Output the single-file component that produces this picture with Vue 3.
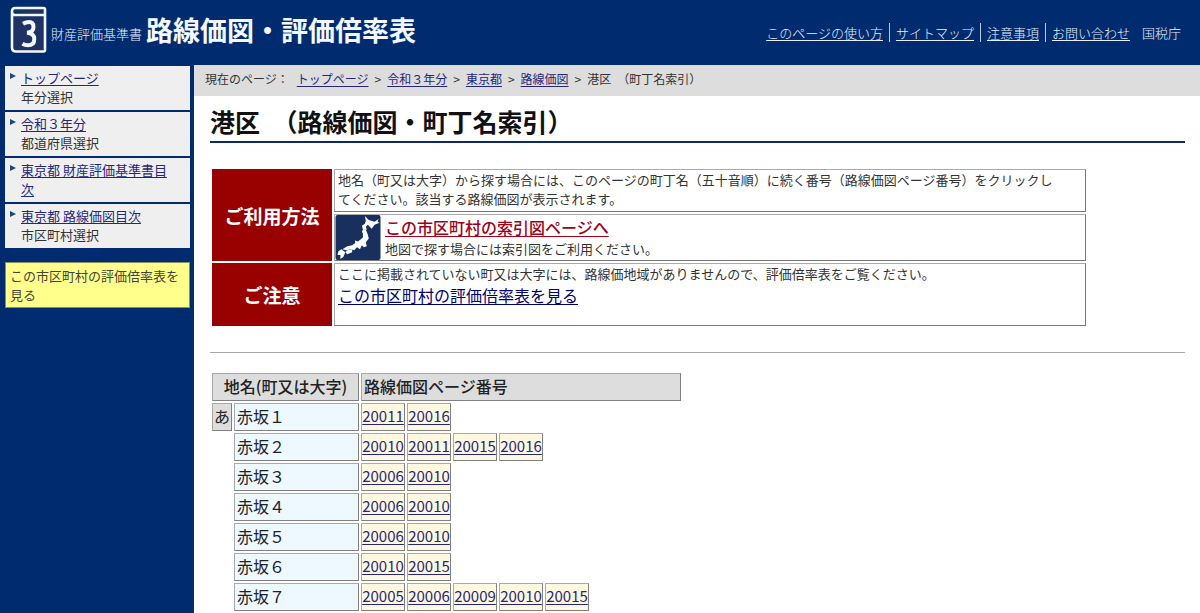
<script setup>
const headerLinks = ['このページの使い方', 'サイトマップ', '注意事項', 'お問い合わせ']

const menu = [
  { link: 'トップページ', note: '年分選択' },
  { link: '令和３年分', note: '都道府県選択' },
  { link: '東京都 財産評価基準書目次', note: '' },
  { link: '東京都 路線価図目次', note: '市区町村選択' },
]

const crumbs = ['トップページ', '令和３年分', '東京都', '路線価図']

const towns = [
  { index: 'あ', name: '赤坂１', pages: ['20011', '20016'] },
  { index: '', name: '赤坂２', pages: ['20010', '20011', '20015', '20016'] },
  { index: '', name: '赤坂３', pages: ['20006', '20010'] },
  { index: '', name: '赤坂４', pages: ['20006', '20010'] },
  { index: '', name: '赤坂５', pages: ['20006', '20010'] },
  { index: '', name: '赤坂６', pages: ['20010', '20015'] },
  { index: '', name: '赤坂７', pages: ['20005', '20006', '20009', '20010', '20015'] },
]
</script>

<template>
  <div class="page">
    <header class="header">
      <div class="brand">
        <svg class="book" viewBox="0 0 38 48" aria-hidden="true">
          <path d="M35 9V3.500Q35 2 33.500 2H5Q2 2 2 5.500Q2 9 5 9H35V44Q35 45.500 33.500 45.500H6Q2 45.500 2 41.500V5.500" fill="#1f3263" stroke="#f2f8ff" stroke-width="2.600" stroke-linejoin="round" />
          <path d="M13 17.800Q16 16 19 16Q23.500 16 23.500 21Q23.500 26.300 17 26.700Q24.300 27.200 24.300 33Q24.300 39.300 18 39.300Q14.800 39.300 12.500 37.800" fill="none" stroke="#f2f8ff" stroke-width="4" />
        </svg>
        <span class="brand-sub">財産評価基準書</span>
        <span class="brand-title">路線価図・評価倍率表</span>
      </div>
      <nav class="header-nav">
        <a v-for="item in headerLinks" :key="item" href="#">{{ item }}</a>
        <span class="agency">国税庁</span>
      </nav>
    </header>

    <div class="body">
      <aside class="sidebar">
        <ul class="menu">
          <li v-for="item in menu" :key="item.link">
            <a href="#">{{ item.link }}</a>
            <span v-if="item.note" class="note">{{ item.note }}</span>
          </li>
        </ul>
        <a class="rate-link" href="#">この市区町村の評価倍率表を見る</a>
      </aside>

      <main class="main">
        <nav class="crumbs">
          <span class="here">現在のページ：</span>
          <template v-for="item in crumbs" :key="item">
            <a href="#">{{ item }}</a><span class="sep">&gt;</span>
          </template>
          <span>港区　（町丁名索引）</span>
        </nav>

        <div class="content">
          <h1>港区　（路線価図・町丁名索引）</h1>

          <table class="guide">
            <tbody>
              <tr class="usage">
                <th rowspan="2" scope="rowgroup">ご利用方法</th>
                <td>地名（町又は大字）から探す場合には、このページの町丁名（五十音順）に続く番号（路線価図ページ番号）をクリックし<br>てください。該当する路線価図が表示されます。</td>
              </tr>
              <tr class="map-row">
                <td>
                  <div class="map-box">
                    <svg class="map" viewBox="0 0 46 46" aria-hidden="true">
                      <rect width="46" height="46" rx="2" fill="#19305f" />
                      <g fill="#fafdff">
                        <path d="M30 1L34 5L40 7L44 4L43 7L45 8L40 10L37 14L33 10L31 12L32 15L28 15L27 11L30 9L31 6Z" />
                        <path d="M28 15L31 15L33 20L34 24L31 28L32 32L29 33L27 31L25 35L22 33L19 36L16 35L11 36L7 35L12 32L17 31L20 29L20 26L23 27L28 23L28 19L27 17Z" />
                        <path d="M12 36L17 35L17 38L12 40L10 38Z" />
                        <path d="M3 37L6 35L10 38L8 43L5 45L5 41L2 41Z" />
                      </g>
                    </svg>
                    <div>
                      <a class="big-link red" href="#">この市区町村の索引図ページへ</a>
                      <p>地図で探す場合には索引図をご利用ください。</p>
                    </div>
                  </div>
                </td>
              </tr>
              <tr class="notice">
                <th scope="row">ご注意</th>
                <td>
                  <p>ここに掲載されていない町又は大字には、路線価地域がありませんので、評価倍率表をご覧ください。</p>
                  <a class="big-link" href="#">この市区町村の評価倍率表を見る</a>
                </td>
              </tr>
            </tbody>
          </table>

          <hr>

          <table class="towns">
            <thead>
              <tr>
                <th colspan="2" scope="col" class="place">地名(町又は大字)</th>
                <th colspan="7" scope="col">路線価図ページ番号</th>
              </tr>
            </thead>
            <tbody>
              <tr v-for="town in towns" :key="town.name">
                <td :class="{ index: town.index }">{{ town.index }}</td>
                <td class="name">{{ town.name }}</td>
                <td v-for="page in town.pages" :key="page" class="number"><a href="#">{{ page }}</a></td>
                <td v-for="n in 7 - town.pages.length" :key="n" class="blank"></td>
              </tr>
            </tbody>
          </table>
        </div>
      </main>
    </div>
  </div>
</template>

<style>
body {
  background: #002b6e;
}
html {
  overflow: hidden;
}
</style>

<style scoped>
.page {
  font-family: "Noto Sans CJK JP", sans-serif;
  font-size: 13px;
  line-height: 19px;
  color: #333;
  height: 100vh;
  overflow: hidden;
  display: flex;
  flex-direction: column;
}
p {
  margin: 0;
}
.header {
  display: flex;
  justify-content: space-between;
  align-items: center;
  height: 65px;
  flex: none;
  padding: 0 19px 0 10px;
  background: #002b6e;
  color: #e6f0ff;
}
.brand {
  display: flex;
  align-items: center;
  padding-bottom: 6px;
}
.book {
  width: 38px;
  height: 48px;
  margin-right: 3px;
}
.brand-sub {
  font-weight: 300;
  margin-top: 8px;
}
.brand-title {
  font-size: 27px;
  line-height: 40px;
  font-weight: 700;
  color: #f4f9ff;
  margin-left: 4px;
}
.header-nav {
  display: flex;
  align-items: center;
  font-weight: 300;
}
.header-nav a {
  color: inherit;
  padding: 0 6px;
  border-right: 1px solid #b9cbe6;
}
.header-nav a:last-of-type {
  border-right: 0;
}
.agency {
  margin-left: 6px;
}
a {
  color: #26267c;
  text-underline-offset: 2px;
}
.body {
  display: flex;
  flex: 1;
  min-height: 0;
}
.sidebar {
  width: 194px;
  flex: none;
  box-sizing: border-box;
  padding: 1px 4px 0 5px;
}
.menu {
  list-style: none;
  margin: 0 0 14px;
  padding: 0;
  display: flex;
  flex-direction: column;
  gap: 2px;
}
.menu li {
  position: relative;
  background: #efefef;
  min-height: 38px;
  padding: 2px 14px 4px 16px;
}
.menu li::before {
  content: "";
  position: absolute;
  left: 5px;
  top: 7px;
  border-left: 6px solid #1c4a7c;
  border-top: 3px solid transparent;
  border-bottom: 3px solid transparent;
}
.note {
  display: block;
}
.rate-link {
  display: block;
  background: #ffff8c;
  border: 1px solid #8d8d62;
  padding: 3px 4px;
  color: #444433;
  text-decoration: none;
}
.main {
  flex: 1;
  min-width: 0;
  background: #fff;
}
.crumbs {
  display: flex;
  background: #ddd;
  font-size: 12px;
  padding: 4px 11px 8px;
}
.here {
  margin-right: 8px;
}
.sep {
  margin: 0 6px;
}
.content {
  padding: 7px 15px 0 16px;
}
h1 {
  margin: 0 0 24px;
  padding-bottom: 2px;
  font-size: 25px;
  line-height: 36px;
  font-weight: 700;
  color: #111;
  border-bottom: 2px solid #0c2c5c;
}
table {
  border-collapse: separate;
  border-spacing: 2px;
}
td,
th {
  box-sizing: border-box;
}
.guide {
  width: 90%;
}
.guide th {
  width: 120px;
  background: #900;
  color: #fff;
  font-size: 19px;
  padding: 0;
}
.guide td {
  border: 1px solid;
  border-color: #aaa #777 #777 #aaa;
  padding: 0 3px 2px;
  vertical-align: top;
}
.guide .usage td {
  height: 43px;
}
.guide .map-row td {
  padding: 0;
}
.map-box {
  display: flex;
  gap: 4px;
}
.map {
  width: 46px;
  height: 45px;
  flex: none;
}
.big-link {
  display: inline-block;
  font-size: 16px;
  line-height: 24px;
  font-weight: 400;
  color: #00006c;
}
.big-link.red {
  color: #a00018;
  font-weight: 500;
}
.guide .notice td {
  height: 63px;
}
hr {
  margin: 24px 0 18px;
  border: 0;
  border-top: 1px solid #aaa;
}
.towns {
  table-layout: fixed;
  font-size: 16px;
  line-height: 24px;
  color: #222;
}
.towns th,
.towns td {
  height: 28px;
  padding: 0 2px 2px;
  text-align: left;
  white-space: nowrap;
}
.towns th,
.index,
.name,
.number {
  border: 1px solid;
  border-color: #aaa #808080 #808080 #aaa;
}
.towns th {
  background: #ddd;
  font-weight: 500;
}
.towns th.place {
  text-align: center;
}
.towns .index {
  background: #ddd;
  width: 20px;
  padding: 0 1px 2px;
}
.towns .name {
  width: 125px;
  background: #edf8ff;
}
.towns .number {
  background: #fff8e0;
  padding: 0 0 2px;
  text-align: center;
  font-size: 15px;
}
.number,
.blank {
  width: 44px;
  min-width: 44px;
}
</style>
